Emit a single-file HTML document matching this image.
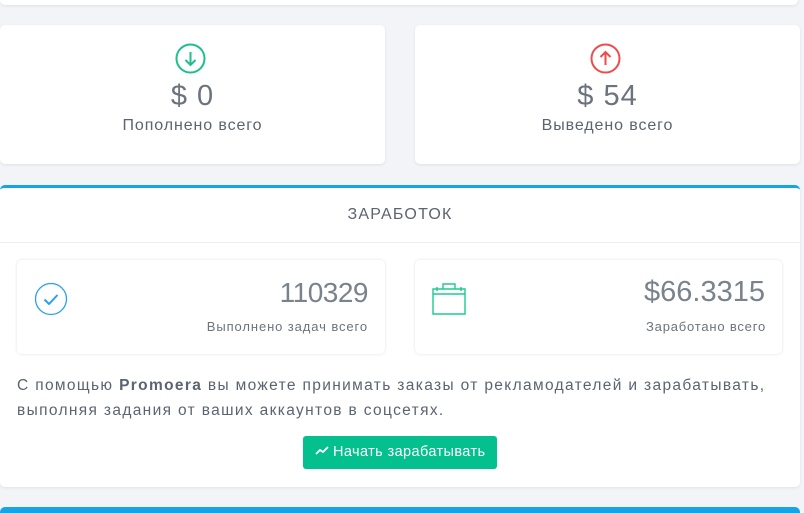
<!DOCTYPE html>
<html><head><meta charset="utf-8"><style>
body{margin:0;width:804px;height:511px;background:#f3f4f7;font-family:"Liberation Sans",sans-serif;position:relative;overflow:hidden;color:#5b6470}
.c{position:absolute;background:#fff;border-radius:5px;box-shadow:0 1px 3px rgba(0,0,0,.08)}
.t{position:absolute;text-align:center;width:100%}
</style></head><body>
<div class="c" style="left:0;top:-10px;width:798px;height:15px"></div>
<div class="c" style="left:0;top:25px;width:385px;height:139px">
 <svg style="position:absolute;left:175px;top:18px" width="31" height="31" viewBox="0 0 31 31"><circle cx="15.5" cy="15.5" r="14" fill="none" stroke="#1dbf8e" stroke-width="2"/><path d="M15.5 9v13M10.5 17l5 5 5-5" fill="none" stroke="#1dbf8e" stroke-width="2"/></svg>
 <div class="t" style="top:55px;font-size:29px;color:#6b737d;letter-spacing:1px">$ 0</div>
 <div class="t" style="top:92px;font-size:16px;letter-spacing:0.9px">Пополнено всего</div>
</div>
<div class="c" style="left:415px;top:25px;width:385px;height:139px">
 <svg style="position:absolute;left:175px;top:18px" width="31" height="31" viewBox="0 0 31 31"><circle cx="15.5" cy="15.5" r="14" fill="none" stroke="#ee4b4b" stroke-width="2"/><path d="M15.5 22V9M10.5 14l5-5 5 5" fill="none" stroke="#ee4b4b" stroke-width="2"/></svg>
 <div class="t" style="top:55px;font-size:29px;color:#6b737d;letter-spacing:1px">$ 54</div>
 <div class="t" style="top:92px;font-size:16px;letter-spacing:0.9px">Выведено всего</div>
</div>
<div class="c" style="left:0;top:185px;width:800px;height:302px;border-top:3px solid #16a4e6;box-sizing:border-box">
 <div class="t" style="top:18px;font-size:16px;color:#5b6470;letter-spacing:1.2px">ЗАРАБОТОК</div>
 <div style="position:absolute;left:0;right:0;top:54px;border-top:1px solid #eceef1"></div>
</div>
<div class="c" style="left:17px;top:260px;width:368px;height:94px;box-shadow:0 0 3px rgba(0,0,0,.12)">
 <svg style="position:absolute;left:17px;top:22px" width="34" height="34" viewBox="0 0 34 34"><circle cx="17" cy="17" r="15.5" fill="none" stroke="#2a9ff0" stroke-width="1.3"/><path d="M10.5 17.5l4.5 4.5 8.5-9" fill="none" stroke="#2a9ff0" stroke-width="2"/></svg>
 <div style="position:absolute;right:17px;top:17px;font-size:28px;color:#7a828c;letter-spacing:-0.5px">110329</div>
 <div style="position:absolute;right:17px;top:59px;font-size:13px;color:#6b737d;letter-spacing:0.9px">Выполнено задач всего</div>
</div>
<div class="c" style="left:415px;top:260px;width:367px;height:94px;box-shadow:0 0 3px rgba(0,0,0,.12)">
 <svg style="position:absolute;left:17px;top:23px" width="35" height="32" viewBox="0 0 35 32"><path d="M1 6h32v25H1zM1 11h32M11 6V1h12v5M5 4v4M29 4v4" fill="none" stroke="#1dcb8e" stroke-width="1.4"/></svg>
 <div style="position:absolute;right:17px;top:16px;font-size:29px;color:#7a828c">$66.3315</div>
 <div style="position:absolute;right:16px;top:59px;font-size:13px;color:#6b737d;letter-spacing:0.8px">Заработано всего</div>
</div>
<div style="position:absolute;left:17px;top:373px;font-size:15.5px;line-height:25px;color:#5b6470;letter-spacing:1.35px;white-space:nowrap">С помощью <b>Promoera</b> вы можете принимать заказы от рекламодателей и зарабатывать,<br>выполняя задания от ваших аккаунтов в соцсетях.</div>
<div style="position:absolute;left:303px;top:436px;width:194px;height:33px;background:#04c08e;border-radius:3px;color:#fff;font-size:14.5px;line-height:33px;text-align:center;letter-spacing:0.4px;white-space:nowrap">
 <svg width="14" height="10" viewBox="0 0 14 10" style="vertical-align:0"><path d="M1 8l4-4 3 2 5-5" fill="none" stroke="#fff" stroke-width="1.8"/></svg> Начать зарабатывать</div>
<div style="position:absolute;left:0;width:800px;top:507px;height:6px;background:#16a4e6;border-radius:5px 5px 0 0"></div>
</body></html>
